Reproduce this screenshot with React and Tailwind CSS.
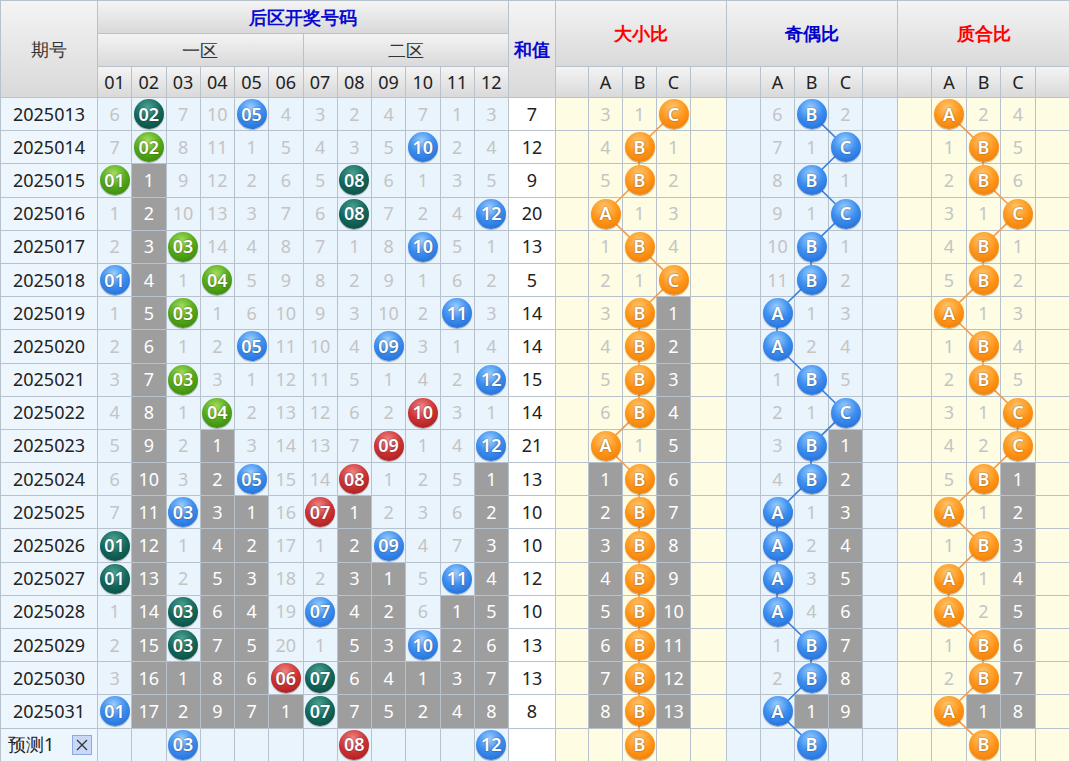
import React from 'react';

const W = [97, ...Array(12).fill(34.25), 47, 33, 34, 34, 34, 36, 34, 34, 34, 34, 35, 34, 35, 34, 35, 34];
const X = [];
W.reduce((acc, w) => { X.push(acc + w / 2); return acc + w; }, 0);
const rowY = (i) => 97 + 33.2 * i + 16.6;

// number cell codes: "b05" ball, "#3" gray, "7" plain
const rows = [
  ['2025013', '6 t02 7 10 b05 4 3 2 4 7 1 3', 7, '3 1 C', '6 B 2', 'A 2 4'],
  ['2025014', '7 g02 8 11 1 5 4 3 5 b10 2 4', 12, '4 B 1', '7 1 C', '1 B 5'],
  ['2025015', 'g01 #1 9 12 2 6 5 t08 6 1 3 5', 9, '5 B 2', '8 B 1', '2 B 6'],
  ['2025016', '1 #2 10 13 3 7 6 t08 7 2 4 b12', 20, 'A 1 3', '9 1 C', '3 1 C'],
  ['2025017', '2 #3 g03 14 4 8 7 1 8 b10 5 1', 13, '1 B 4', '10 B 1', '4 B 1'],
  ['2025018', 'b01 #4 1 g04 5 9 8 2 9 1 6 2', 5, '2 1 C', '11 B 2', '5 B 2'],
  ['2025019', '1 #5 g03 1 6 10 9 3 10 2 b11 3', 14, '3 B #1', 'A 1 3', 'A 1 3'],
  ['2025020', '2 #6 1 2 b05 11 10 4 b09 3 1 4', 14, '4 B #2', 'A 2 4', '1 B 4'],
  ['2025021', '3 #7 g03 3 1 12 11 5 1 4 2 b12', 15, '5 B #3', '1 B 5', '2 B 5'],
  ['2025022', '4 #8 1 g04 2 13 12 6 2 r10 3 1', 14, '6 B #4', '2 1 C', '3 1 C'],
  ['2025023', '5 #9 2 #1 3 14 13 7 r09 1 4 b12', 21, 'A 1 #5', '3 B #1', '4 2 C'],
  ['2025024', '6 #10 3 #2 b05 15 14 r08 1 2 5 #1', 13, '#1 B #6', '4 B #2', '5 B #1'],
  ['2025025', '7 #11 b03 #3 #1 16 r07 #1 2 3 6 #2', 10, '#2 B #7', 'A 1 #3', 'A 1 #2'],
  ['2025026', 't01 #12 1 #4 #2 17 1 #2 b09 4 7 #3', 10, '#3 B #8', 'A 2 #4', '1 B #3'],
  ['2025027', 't01 #13 2 #5 #3 18 2 #3 #1 5 b11 #4', 12, '#4 B #9', 'A 3 #5', 'A 1 #4'],
  ['2025028', '1 #14 t03 #6 #4 19 b07 #4 #2 6 #1 #5', 10, '#5 B #10', 'A 4 #6', 'A 2 #5'],
  ['2025029', '2 #15 t03 #7 #5 20 1 #5 #3 b10 #2 #6', 13, '#6 B #11', '1 B #7', '1 B #6'],
  ['2025030', '3 #16 #1 #8 #6 r06 t07 #6 #4 #1 #3 #7', 13, '#7 B #12', '2 B #8', '2 B #7'],
  ['2025031', 'b01 #17 #2 #9 #7 #1 t07 #7 #5 #2 #4 #8', 8, '#8 B #13', 'A #1 #9', 'A #1 #8'],
];

const ballBg = {
  b: 'bg-[radial-gradient(circle_at_45%_30%,#9fd0ff_0%,#3d8ff0_45%,#1a62d0_100%)]',
  t: 'bg-[radial-gradient(circle_at_45%_30%,#4fa596_0%,#13675b_50%,#0a4038_100%)]',
  g: 'bg-[radial-gradient(circle_at_45%_30%,#a6e060_0%,#52a818_50%,#2f7a08_100%)]',
  r: 'bg-[radial-gradient(circle_at_45%_30%,#f08888_0%,#cc3232_50%,#9a1515_100%)]',
  o: 'bg-[radial-gradient(circle_at_45%_30%,#ffc870_0%,#ff9418_50%,#e87400_100%)]',
};

const bd = 'border-r border-b border-[#b7c2cc]';
const hd = 'bg-gradient-to-b from-[#f4f4f4] to-[#d9d9d9] flex items-center justify-center';

const Ball = ({ c, t }) => (
  <div className={`relative z-10 w-[30px] h-[30px] rounded-full ${ballBg[c]} text-white font-semibold text-[18px] flex items-center justify-center shadow-[0_1px_1px_rgba(0,0,0,0.3)] [text-shadow:0_0_2px_rgba(0,0,0,0.5)]`}>
    {t}
  </div>
);

const Cell = ({ v, bg, ratioColor }) => {
  if (v && v[0] === '#') {
    return <div className={`${bd} bg-[#9e9e9e] text-white flex items-center justify-center`}>{v.slice(1)}</div>;
  }
  let inner = null;
  if (v && /^[btgr]\d/.test(v)) inner = <Ball c={v[0]} t={v.slice(1)} />;
  else if (v && /^[ABC]$/.test(v)) inner = <Ball c={ratioColor} t={v} />;
  else if (v) inner = <span className="text-[#c4c4c4]">{v}</span>;
  return <div className={`${bd} ${bg} flex items-center justify-center`}>{inner}</div>;
};

const sections = [
  { title: '大小比', color: 'text-[#ff0000]', bg: 'bg-[#fefde4]', ball: 'o', line: '#f59a4a' },
  { title: '奇偶比', color: 'text-[#0000cc]', bg: 'bg-[#eaf4fd]', ball: 'b', line: '#3b7fd8' },
  { title: '质合比', color: 'text-[#ff0000]', bg: 'bg-[#fefde4]', ball: 'o', line: '#f59a4a' },
];

const RatioCells = ({ vals, s }) => {
  const sec = sections[s];
  return (
    <>
      <div className={`${bd} ${sec.bg}`} />
      {vals.map((v, k) => <Cell key={k} v={v} bg={sec.bg} ratioColor={sec.ball} />)}
      <div className={`${bd} ${sec.bg}`} />
    </>
  );
};

export default function App() {
  const pred = ['B', 'B', 'B'];
  // line points per section
  const lines = sections.map((sec, s) => {
    const pts = rows.map((r, i) => {
      const k = r[3 + s].split(' ').findIndex((v) => /^[ABC]$/.test(v));
      return [X[14 + 5 * s + 1 + k], rowY(i)];
    });
    pts.push([X[14 + 5 * s + 2], rowY(19)]);
    return pts;
  });

  return (
    <div className="relative w-[1069px] h-[761px] overflow-hidden bg-white text-[18px] text-[#222] font-['Noto_Sans','Noto_Sans_CJK_SC',sans-serif]">
      <div className="grid grid-cols-[97px_repeat(12,34.25px)_47px_33px_34px_34px_34px_36px_34px_34px_34px_34px_35px_34px_35px_34px_35px_34px] grid-rows-[33px_33px_31px] auto-rows-[33.2px] border-l border-t border-[#b7c2cc]">
        <div className={`${bd} ${hd} row-span-3 text-[#333]`}>期号</div>
        <div className={`${bd} ${hd} col-span-12 font-bold text-[#0a0ad0]`}>后区开奖号码</div>
        <div className={`${bd} ${hd} row-span-3 font-bold text-[#0a0ad0]`}>和值</div>
        {sections.map((sec) => (
          <div key={sec.title} className={`${bd} ${hd} col-span-5 row-span-2 font-bold ${sec.color}`}>{sec.title}</div>
        ))}
        <div className={`${bd} ${hd} col-span-6 text-[#333]`}>一区</div>
        <div className={`${bd} ${hd} col-span-6 text-[#333]`}>二区</div>
        {Array.from({ length: 12 }, (_, i) => (
          <div key={i} className={`${bd} ${hd} text-[#222]`}>{String(i + 1).padStart(2, '0')}</div>
        ))}
        {sections.map((sec) => (
          <React.Fragment key={sec.title}>
            <div className={`${bd} ${hd}`} />
            <div className={`${bd} ${hd} text-[#222]`}>A</div>
            <div className={`${bd} ${hd} text-[#222]`}>B</div>
            <div className={`${bd} ${hd} text-[#222]`}>C</div>
            <div className={`${bd} ${hd}`} />
          </React.Fragment>
        ))}

        {rows.map((r) => (
          <React.Fragment key={r[0]}>
            <div className={`${bd} bg-[#eef6fd] flex items-center justify-center`}>{r[0]}</div>
            {r[1].split(' ').map((v, k) => <Cell key={k} v={v} bg="bg-[#eaf4fd]" />)}
            <div className={`${bd} bg-white flex items-center justify-center`}>{r[2]}</div>
            {[0, 1, 2].map((s) => <RatioCells key={s} s={s} vals={r[3 + s].split(' ')} />)}
          </React.Fragment>
        ))}

        <div className={`${bd} bg-[#eef6fd] flex items-center justify-between pl-[7px] pr-[5px]`}>
          <span>预测1</span>
          <span className="w-[20px] h-[20px] bg-[#c9d9f5] border border-[#8fa8e0] flex items-center justify-center">
            <svg width="14" height="14" viewBox="0 0 14 14"><path d="M2 2L12 12M12 2L2 12" stroke="#333" strokeWidth="1.3" /></svg>
          </span>
        </div>
        {'. . b03 . . . . r08 . . . b12'.split(' ').map((v, k) => <Cell key={k} v={v === '.' ? '' : v} bg="bg-[#eaf4fd]" />)}
        <div className={`${bd} bg-white`} />
        {[0, 1, 2].map((s) => <RatioCells key={s} s={s} vals={['', pred[s], '']} />)}
      </div>

      <svg className="absolute left-0 top-0 pointer-events-none" width="1069" height="761">
        {lines.map((pts, s) => (
          <polyline key={s} points={pts.map((p) => p.join(',')).join(' ')} fill="none" stroke={sections[s].line} strokeWidth="1.6" />
        ))}
      </svg>
    </div>
  );
}
